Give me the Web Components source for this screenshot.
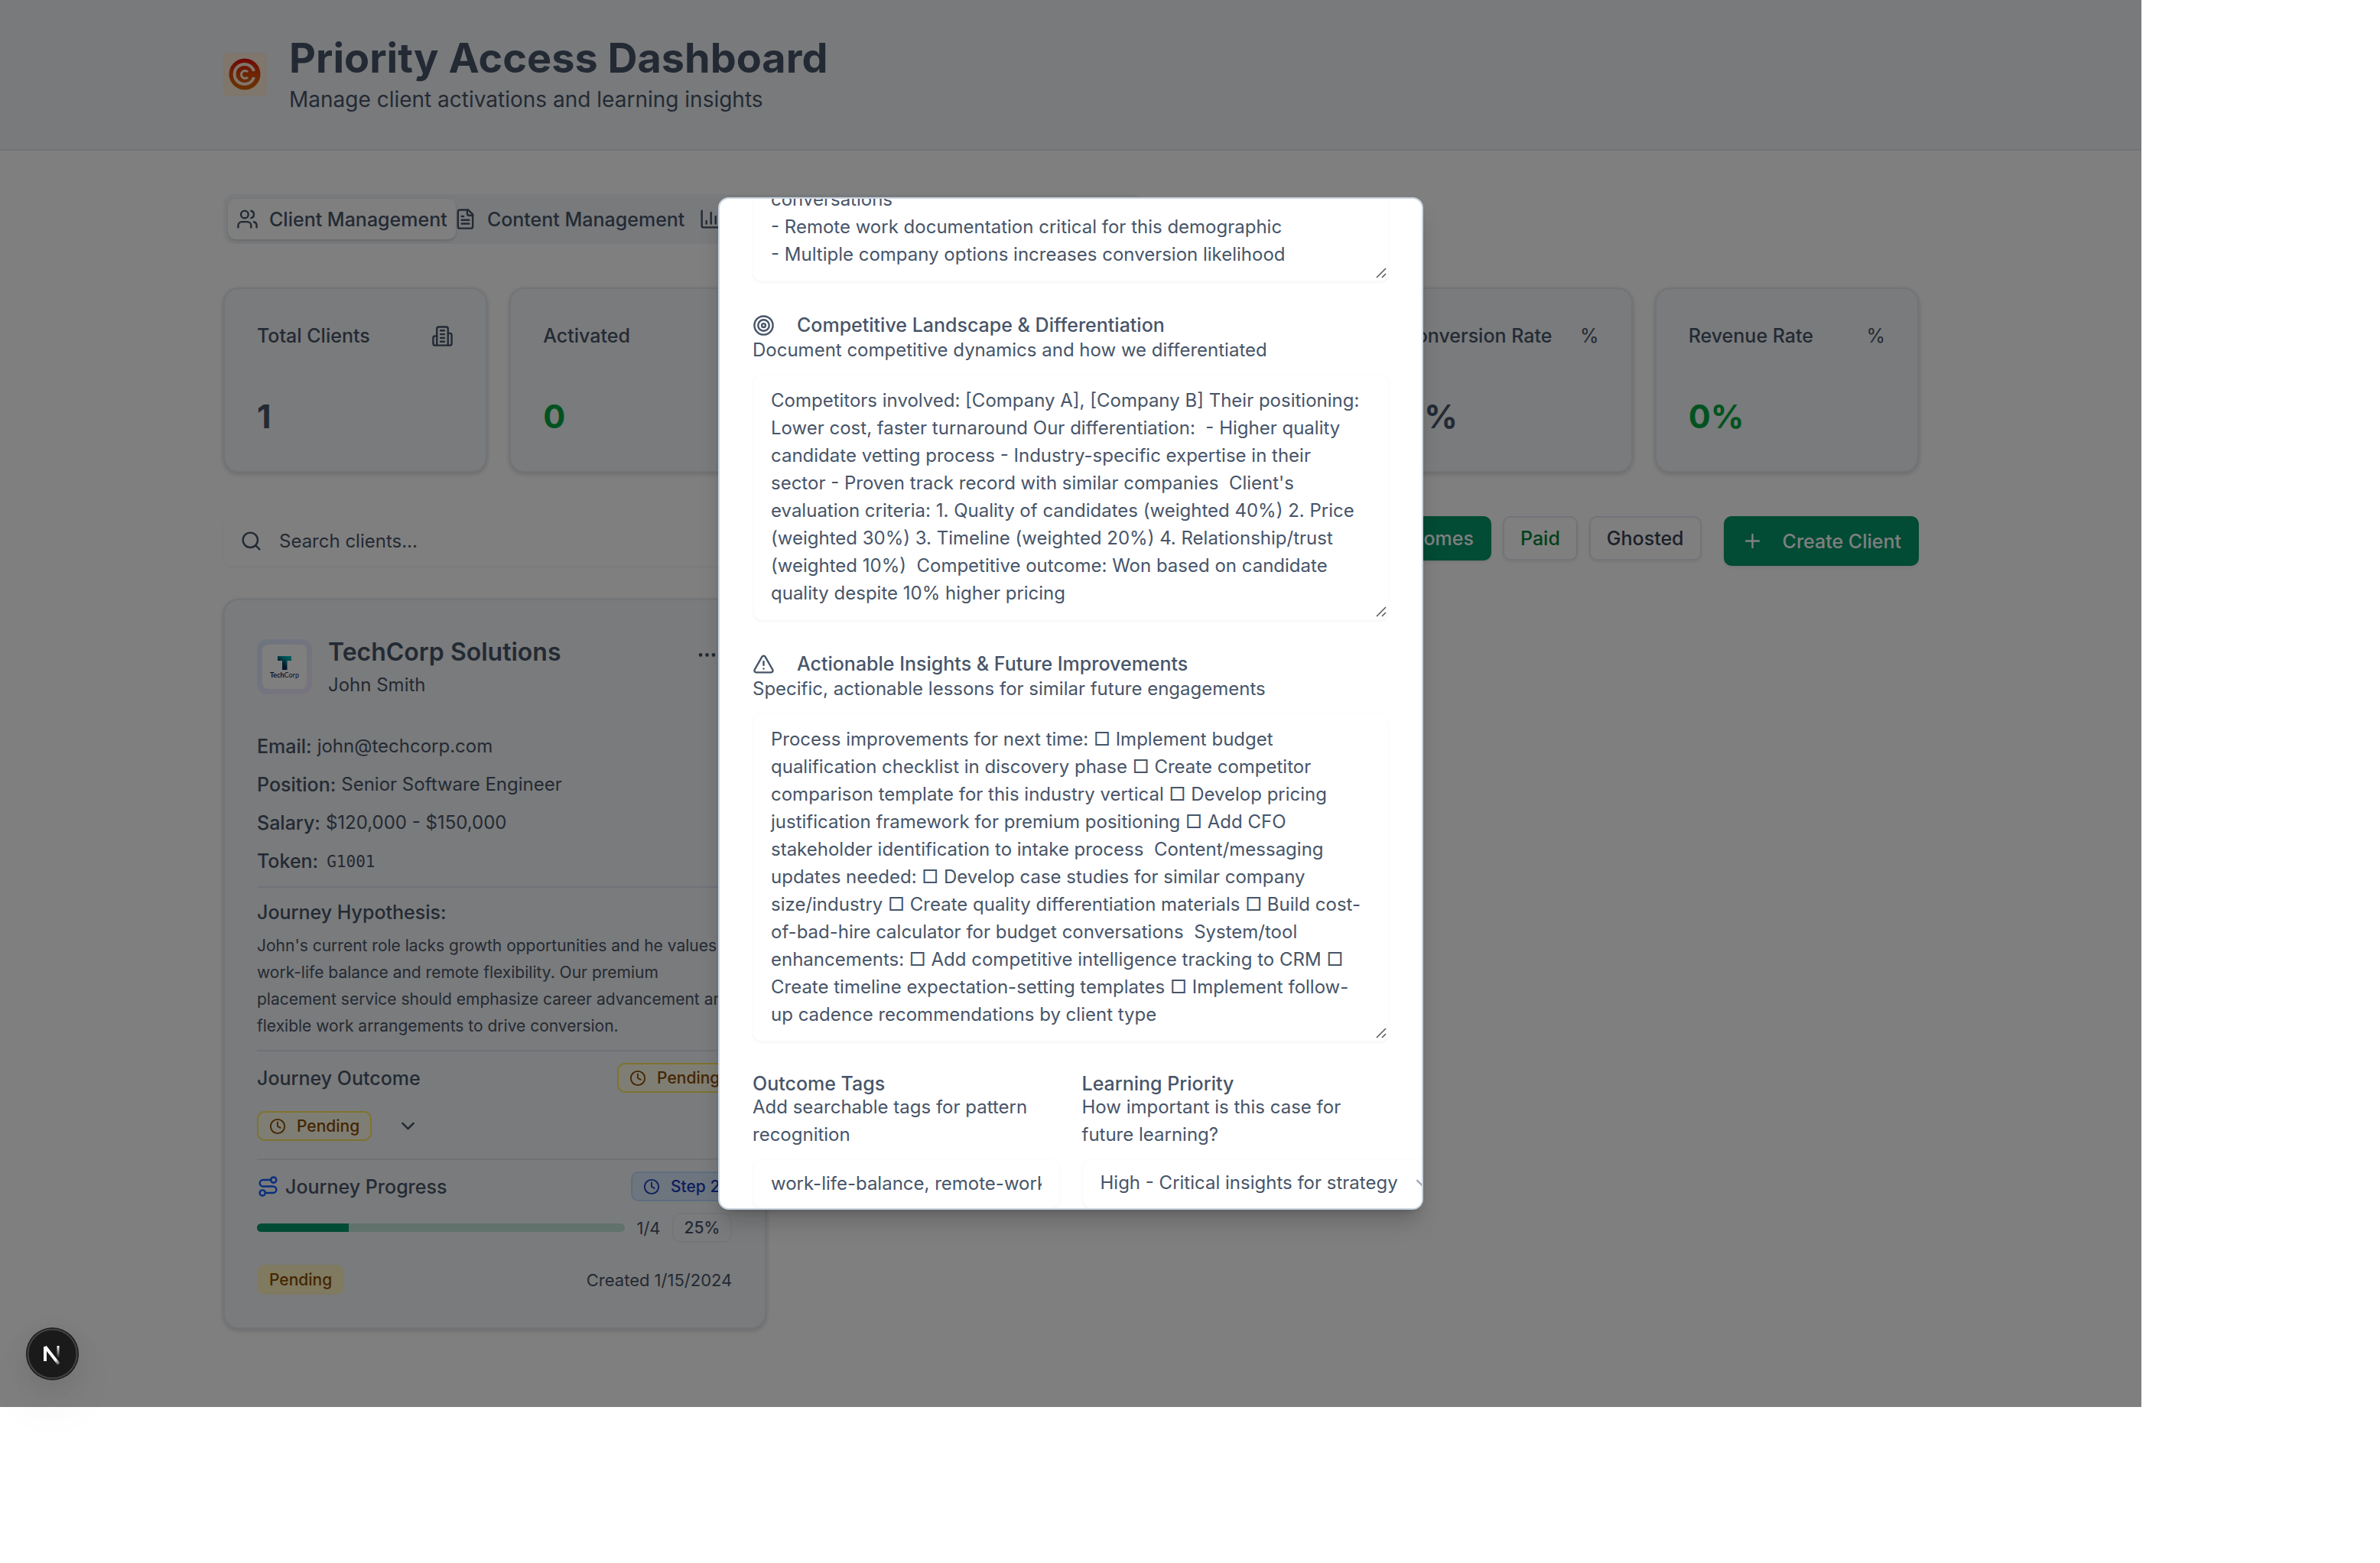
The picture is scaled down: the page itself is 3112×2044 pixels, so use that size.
<!DOCTYPE html>
<html lang="en">
<head>
<meta charset="utf-8">
<title>Priority Access Dashboard</title>
<style>
  html, body { height: 100%; }
  body { margin: 0; background: #fff; box-sizing: border-box; padding: 0 312px 204px 0;
    font-family: Inter, "Liberation Sans", sans-serif; font-size: 25px; line-height: 36px; color: #475569; }
</style>
</head>
<body>
<app-shell>
  <page-header heading="Priority Access Dashboard" tagline="Manage client activations and learning insights"></page-header>
  <tab-bar></tab-bar>
  <stat-grid>
    <stat-card label="Total Clients" value="1"><ui-icon name="building"></ui-icon></stat-card>
    <stat-card label="Activated" value="0" tone="green"><ui-icon name="check" style="color:#00a63e"></ui-icon></stat-card>
    <stat-card></stat-card>
    <stat-card></stat-card>
    <stat-card label="Conversion Rate" value="0%">%</stat-card>
    <stat-card label="Revenue Rate" value="0%" tone="green">%</stat-card>
  </stat-grid>
  <filter-bar></filter-bar>
  <client-grid><client-card></client-card></client-grid>
  <insight-dialog slot="modal"></insight-dialog>
  <dev-badge slot="badge"></dev-badge>
</app-shell>

<script>
const BASE = `:host,*{box-sizing:border-box}button,input,textarea,select{font:inherit;color:inherit;margin:0}`;
function define(name, render, after) {
  customElements.define(name, class extends HTMLElement {
    connectedCallback() {
      if (this.shadowRoot) return;
      const root = this.attachShadow({ mode: 'open' });
      const t = document.createElement('template');
      t.innerHTML = '<style>' + BASE + '</style>' + render(this);
      root.append(t.content.cloneNode(true));
      if (after) after(this, root);
    }
  });
}
const attr = (el, n, d = '') => el.getAttribute(n) || d;

const ICONS = {
  users: '<path d="M16 21v-2a4 4 0 0 0-4-4H6a4 4 0 0 0-4 4v2"/><circle cx="9" cy="7" r="4"/><path d="M22 21v-2a4 4 0 0 0-3-3.87M16 3.13a4 4 0 0 1 0 7.75"/>',
  file: '<path d="M15 2H6a2 2 0 0 0-2 2v16a2 2 0 0 0 2 2h12a2 2 0 0 0 2-2V7Z"/><path d="M14 2v4a2 2 0 0 0 2 2h4M10 9H8M16 13H8M16 17H8"/>',
  chart: '<path d="M3 3v16a2 2 0 0 0 2 2h16M18 17V9M13 17V5M8 17v-3"/>',
  building: '<path d="M6 22V4a2 2 0 0 1 2-2h8a2 2 0 0 1 2 2v18Z"/><path d="M6 12H4a2 2 0 0 0-2 2v6a2 2 0 0 0 2 2h2M18 9h2a2 2 0 0 1 2 2v9a2 2 0 0 1-2 2h-2M10 6h4M10 10h4M10 14h4M10 18h4"/>',
  check: '<circle cx="12" cy="12" r="10"/><path d="m9 12 2 2 4-4"/>',
  search: '<circle cx="11" cy="11" r="8"/><path d="m21 21-4.3-4.3"/>',
  plus: '<path d="M5 12h14M12 5v14"/>',
  dots: '<circle cx="12" cy="12" r="1"/><circle cx="19" cy="12" r="1"/><circle cx="5" cy="12" r="1"/>',
  clock: '<circle cx="12" cy="12" r="10"/><path d="M12 6v6l4 2"/>',
  chevron: '<path d="m6 9 6 6 6-6"/>',
  route: '<circle cx="6" cy="19" r="3"/><path d="M9 19h8.500a3.500 3.500 0 0 0 0-7h-11a3.500 3.500 0 0 1 0-7H15"/><circle cx="18" cy="5" r="3"/>',
  target: '<circle cx="12" cy="12" r="10"/><circle cx="12" cy="12" r="6"/><circle cx="12" cy="12" r="2"/>',
  alert: '<path d="m21.730 18-8-14a2 2 0 0 0-3.480 0l-8 14A2 2 0 0 0 4 21h16a2 2 0 0 0 1.730-3M12 9v4M12 17h.01"/>'
};
define('ui-icon', el => `<style>
  :host{display:inline-flex;flex:none;width:29px;height:29px}
  :host([small]){width:22px;height:22px}
  svg{width:100%;height:100%;fill:none;stroke:currentColor;stroke-width:2;stroke-linecap:round;stroke-linejoin:round}
</style><svg viewBox="0 0 24 24" aria-hidden="true">${ICONS[attr(el, 'name')]}</svg>`);

define('app-shell', () => `<style>
  :host{display:block;position:relative;height:100%;background:#fff}
  main{display:flex;flex-direction:column;padding:0 291px 0 292px}
  .scrim{position:absolute;inset:0;background:rgba(0,0,0,.5);display:flex;align-items:center;justify-content:center}
  .badge{position:absolute;left:34px;bottom:35px}
</style><main><slot></slot></main><div class="scrim"><slot name="modal"></slot></div><div class="badge"><slot name="badge"></slot></div>`);

define('page-header', el => `<style>
  :host{display:block;margin:0 -291px 0 -292px}
  header{display:flex;align-items:center;gap:29px;padding:43px 292px;background:#f3f5f9;border-bottom:2px solid #e2e8f0}
  h1{margin:0;font-size:54px;line-height:65px;font-weight:700}
  p{margin:0;font-size:28px;line-height:44px}
  .logo{width:57px;height:57px;flex:none}
</style><header>
<svg class="logo" viewBox="0 0 57 57" aria-hidden="true"><defs><linearGradient id="g" x1="0" y1="0" x2="0" y2="1"><stop offset="0" stop-color="#e0100c"/><stop offset=".5" stop-color="#dc4a08"/><stop offset="1" stop-color="#d86400"/></linearGradient></defs>
<rect width="57" height="57" rx="5" fill="#ffedd9"/><circle cx="28" cy="28" r="20.500" fill="url(#g)"/>
<path d="M40 24A13 13 0 1 0 40 32" fill="none" stroke="#ffedd9" stroke-width="4"/><path d="M32 25A5 5 0 1 0 32 32" fill="none" stroke="#ffedd9" stroke-width="3"/></svg>
<div><h1>${attr(el, 'heading')}</h1><p>${attr(el, 'tagline')}</p></div></header>`);

define('tab-bar', () => `<style>
  :host{display:block;padding-top:57px}
  nav{display:grid;grid-template-columns:repeat(4,minmax(0,1fr));width:1203px;height:65px;padding:6px;border-radius:14px;background:#f1f5f9}
  button{display:flex;align-items:center;justify-content:center;gap:14px;border:0;background:none;border-radius:10px;padding:0;font-weight:500;white-space:nowrap}
  .on{background:#fff;box-shadow:0 2px 4px rgba(0,0,0,.15)}
  .cut{justify-content:flex-start;padding-left:20px}
</style><nav role="tablist">
<button class="on" role="tab"><ui-icon name="users"></ui-icon>Client Management</button>
<button role="tab"><ui-icon name="file"></ui-icon>Content Management</button>
<button class="cut" role="tab" aria-label="Analytics"><ui-icon name="chart"></ui-icon></button></nav>`);

define('stat-grid', () => `<style>
  :host{display:grid;grid-template-columns:repeat(6,minmax(0,1fr));gap:29px;padding-top:57px}
</style><slot></slot>`);

const CARD = `background:#f4f6f9;border:2px solid #e2e8f0;border-radius:20px;box-shadow:0 2px 6px rgba(0,0,0,.18)`;
define('stat-card', el => `<style>
  :host{display:flex;flex-direction:column;justify-content:space-between;height:242px;padding:43px 42px;${CARD}}
  .top{display:flex;align-items:center;justify-content:space-between;font-weight:500;white-space:nowrap}
  .mark{display:flex;font-weight:400}
  .num{font-size:43px;line-height:58px;font-weight:700}
  :host([tone=green]) .num{color:#00a63e}
</style><div class="top">${attr(el, 'label')}<span class="mark"><slot></slot></span></div><div class="num">${attr(el, 'value')}</div>`);

define('filter-bar', () => `<style>
  :host{display:flex;align-items:flex-start;justify-content:space-between;padding-top:57px}
  .search{display:flex;align-items:center;gap:22px;width:900px;height:65px;padding:0 22px;border-radius:10px;box-shadow:0 2px 4px rgba(0,0,0,.05)}
  input{flex:1;border:0;background:none;outline:0;padding:0;min-width:0;font-size:24px}
  input::placeholder{color:#475569;opacity:1}
  .group{display:flex;align-items:flex-start;gap:15px}
  button{height:58px;padding:0 21px;border:2px solid #e2e8f0;border-radius:10px;background:#fff;font-weight:500;white-space:nowrap;box-shadow:0 2px 4px rgba(0,0,0,.08)}
  .solid{background:#059669;border-color:#059669;color:#fff}
  .paid{color:#008236}.ghost{color:#364153}
  .create{display:flex;align-items:center;gap:25px;height:65px;margin-left:14px}
</style>
<label class="search"><ui-icon name="search"></ui-icon><input type="search" placeholder="Search clients..." aria-label="Search clients"></label>
<div class="group"><button class="solid">All Outcomes</button><button class="paid">Paid</button><button class="ghost">Ghosted</button>
<button class="solid create"><ui-icon name="plus"></ui-icon>Create Client</button></div>`);

define('status-badge', el => `<style>
  :host{display:inline-flex;align-items:center;gap:14px;height:39px;padding:0 14px;border:2px solid #e9edf2;border-radius:10px;font-size:21px;line-height:29px;font-weight:500;white-space:nowrap}
  :host([tone=wait]){background:#fefce8;border-color:#fde65a;color:#894b00}
  :host([tone=solid]){background:#fef5c0;border-color:#fef5c0;color:#894b00}
  :host([tone=step]){background:#dbeafe;border-color:#bedbff;color:#193cb8}
</style>${attr(el, 'icon') ? `<ui-icon small name="${attr(el, 'icon')}"></ui-icon>` : ''}<slot></slot>`);

define('client-grid', () => `<style>
  :host{display:grid;grid-template-columns:repeat(3,minmax(0,1fr));gap:43px;padding-top:43px}
</style><slot></slot>`);

define('client-card', () => `<style>
  :host{display:flex;flex-direction:column;gap:14px;padding:45px 43px 43px 42px;${CARD}}
  .head{display:flex;align-items:center;gap:21px;padding-bottom:30px}
  .who{flex:1}
  h2{margin:0;font-size:32px;line-height:46px;font-weight:600}
  .who p{margin:2px 0 0}
  .head button{border:0;background:none;padding:0;display:flex;align-self:flex-start;margin:12px 18px 0 0}
  .logo{width:72px;height:72px}
  dl,dd,h3,p{margin:0}
  dl{display:flex;flex-direction:column;gap:14px}
  dl div{display:flex;gap:7px} dt{font-weight:500} dd,.who p{font-size:24px}
  code{font-family:"DejaVu Sans Mono",monospace;font-size:21px;padding:0 4px}
  section{border-top:2px solid #dfe5ee;padding-top:14px}
  h3{font-size:25px;line-height:36px;font-weight:500}
  .text{margin-top:8px;font-size:21px;line-height:35px;white-space:nowrap}
  .row{display:flex;align-items:center;justify-content:space-between;height:41px}
  .pick{display:flex;align-items:center;gap:33px;height:57px;margin-top:14px;padding:0;border:0;background:none}
  .title{display:flex;align-items:center;gap:8px}
  .title ui-icon{color:#155dfc}
  .prog{display:flex;align-items:center;gap:15px;margin-top:14px;font-size:22px}
  .bar{flex:1;height:11px;border-radius:6px;overflow:hidden;background:#c3e2d9}
  .bar i{display:block;width:25%;height:100%;background:#059669}
  .foot{display:flex;align-items:center;justify-content:space-between;padding-top:15px;font-size:22px}
</style>
<div class="head">
<svg class="logo" viewBox="0 0 72 72" role="img" aria-label="TechCorp logo"><defs><linearGradient id="f" x1="0" y1="0" x2="1" y2="1"><stop offset="0" stop-color="#dbeafe"/><stop offset="1" stop-color="#f3e8ff"/></linearGradient><linearGradient id="t" x1="1" y1="0" x2="0.300" y2="1"><stop offset="0" stop-color="#00c8bb"/><stop offset=".3" stop-color="#05a0a5"/><stop offset=".7" stop-color="#0b3a5b"/><stop offset="1" stop-color="#0b1a4a"/></linearGradient></defs>
<rect width="72" height="72" rx="13" fill="url(#f)"/><rect x="7" y="7" width="58" height="58" rx="8" fill="#fff"/><path d="M27 22H45V28H39.500V40H33V28H27Z" fill="url(#t)"/>
<text x="36" y="50" text-anchor="middle" font-size="9" font-family="Lato" fill="#1e1b4b"><tspan font-weight="700">Tech</tspan>Corp</text></svg>
<div class="who"><h2>TechCorp Solutions</h2><p>John Smith</p></div>
<button aria-label="Client actions"><ui-icon name="dots"></ui-icon></button></div>
<dl><div><dt>Email:</dt><dd>john@techcorp.com</dd></div><div><dt>Position:</dt><dd>Senior Software Engineer</dd></div>
<div><dt>Salary:</dt><dd>$120,000 - $150,000</dd></div><div><dt>Token:</dt><dd><code>G1001</code></dd></div></dl>
<section><h3>Journey Hypothesis:</h3><p class="text">John's current role lacks growth opportunities and he values<br>work-life balance and remote flexibility. Our premium<br>placement service should emphasize career advancement and<br>flexible work arrangements to drive conversion.</p></section>
<section><div class="row"><h3>Journey Outcome</h3><status-badge tone="wait" icon="clock">Pending</status-badge></div>
<button class="pick"><status-badge tone="wait" icon="clock">Pending</status-badge><ui-icon name="chevron"></ui-icon></button></section>
<section><div class="row"><div class="title"><ui-icon name="route"></ui-icon><h3>Journey Progress</h3></div><status-badge tone="step" icon="clock">Step 2</status-badge></div>
<div class="prog"><div class="bar" role="progressbar" aria-valuenow="25"><i></i></div><span>1/4</span><status-badge>25%</status-badge></div></section>
<div class="foot"><status-badge tone="solid">Pending</status-badge><span>Created 1/15/2024</span></div>`);

define('form-field', el => {
  const kind = attr(el, 'kind', 'textarea'), v = el.textContent;
  const control = kind === 'textarea'
    ? `<textarea id="c" rows="${v.split('\n').length}"></textarea><svg class="grip" viewBox="0 0 14 14" aria-hidden="true"><path d="M1 13 13 1M8 13l5-5"/></svg>`
    : kind === 'select' ? `<select id="c"><option>${v}</option></select><ui-icon name="chevron"></ui-icon>`
    : `<input id="c" type="text" value="${v}">`;
  return `<style>
  :host{display:flex;flex-direction:column;min-width:0}
  label{display:flex;align-items:center;gap:29px;font-weight:500;line-height:25px}
  p{margin:0 0 13px;font-size:24px}
  .box{position:relative;display:flex}
  textarea,input,select{width:100%;font-size:24px;background:#fff;border:2px solid #fdfdfe;border-radius:12px;box-shadow:0 2px 3px rgba(0,0,0,.04);outline:0;padding:15px 22px}
  textarea{display:block;resize:none;overflow:hidden;white-space:pre}
  input,select{height:65px;padding:0 22px}
  select{appearance:none;flex:none;width:484px}
  .box ui-icon{position:absolute;left:431px;top:18px;opacity:.5}
  .grip{position:absolute;right:3px;bottom:4px;width:14px;height:14px;stroke:#555;stroke-width:1.500;fill:none}
</style>${attr(el, 'label') ? `<label for="c">${attr(el, 'icon') ? `<ui-icon name="${attr(el, 'icon')}"></ui-icon>` : ''}${attr(el, 'label')}</label><p>${attr(el, 'hint')}</p>` : ''}<div class="box">${control}</div>`;
}, (el, root) => {
  const area = root.querySelector('textarea');
  if (area) { area.value = el.textContent; if (!attr(el, 'label')) area.setAttribute('aria-label', 'Key learnings'); }
});

define('insight-dialog', () => `<style>
  :host{display:block;width:922px;height:72%}
  div.panel{height:100%;overflow:hidden;padding:43px;background:#fff;border:2px solid #cbd5e1;border-radius:14px;box-shadow:0 20px 30px -6px rgba(0,0,0,.2),0 8px 12px -8px rgba(0,0,0,.2);display:flex;flex-direction:column;gap:43px}
  form-field{flex:none}
  .pair{flex:none;display:grid;grid-template-columns:1fr 1fr;gap:29px}
</style><div class="panel" role="dialog" aria-label="Outcome insights">
<form-field>conversations
- Remote work documentation critical for this demographic
- Multiple company options increases conversion likelihood</form-field>
<form-field icon="target" label="Competitive Landscape &amp; Differentiation" hint="Document competitive dynamics and how we differentiated">Competitors involved: [Company A], [Company B] Their positioning:
Lower cost, faster turnaround Our differentiation:  - Higher quality
candidate vetting process - Industry-specific expertise in their
sector - Proven track record with similar companies  Client's
evaluation criteria: 1. Quality of candidates (weighted 40%) 2. Price
(weighted 30%) 3. Timeline (weighted 20%) 4. Relationship/trust
(weighted 10%)  Competitive outcome: Won based on candidate
quality despite 10% higher pricing</form-field>
<form-field icon="alert" label="Actionable Insights &amp; Future Improvements" hint="Specific, actionable lessons for similar future engagements">Process improvements for next time: □ Implement budget
qualification checklist in discovery phase □ Create competitor
comparison template for this industry vertical □ Develop pricing
justification framework for premium positioning □ Add CFO
stakeholder identification to intake process  Content/messaging
updates needed: □ Develop case studies for similar company
size/industry □ Create quality differentiation materials □ Build cost-
of-bad-hire calculator for budget conversations  System/tool
enhancements: □ Add competitive intelligence tracking to CRM □
Create timeline expectation-setting templates □ Implement follow-
up cadence recommendations by client type</form-field>
<div class="pair">
<form-field kind="input" label="Outcome Tags" hint="Add searchable tags for pattern recognition">work-life-balance, remote-work</form-field>
<form-field kind="select" label="Learning Priority" hint="How important is this case for future learning?">High - Critical insights for strategy</form-field>
</div></div>`, (el, root) => { root.querySelector('.panel').scrollTop = 77; });

define('dev-badge', () => `<style>
  :host{display:block;width:69px;height:69px;border-radius:50%;box-shadow:0 32px 64px rgba(0,0,0,.06),0 8px 32px rgba(0,0,0,.08)}
  button{display:block;padding:0;border:0;background:none;width:69px;height:69px}
  svg{display:block}
</style><button aria-label="Open Next.js Dev Tools"><svg width="69" height="69" viewBox="0 0 69 69"><defs>
<linearGradient id="a" gradientUnits="userSpaceOnUse" x1="34" y1="34" x2="45" y2="49"><stop offset=".5" stop-color="#fff"/><stop offset="1" stop-color="#fff" stop-opacity="0"/></linearGradient>
<linearGradient id="b" gradientUnits="userSpaceOnUse" x1="42" y1="24" x2="42" y2="40"><stop offset="0" stop-color="#fff"/><stop offset="1" stop-color="#fff" stop-opacity="0"/></linearGradient></defs>
<circle cx="34.500" cy="34.500" r="34.500" fill="#1a1a1a"/><circle cx="34.500" cy="34.500" r="32" fill="none" stroke="#444" stroke-width="2"/>
<path d="M25 44V25" stroke="#fff" stroke-width="4"/><path d="M25 25 43 48" stroke="url(#a)" stroke-width="4"/><path d="M42 24V40" stroke="url(#b)" stroke-width="3"/></svg></button>`);
</script>
</body>
</html>
